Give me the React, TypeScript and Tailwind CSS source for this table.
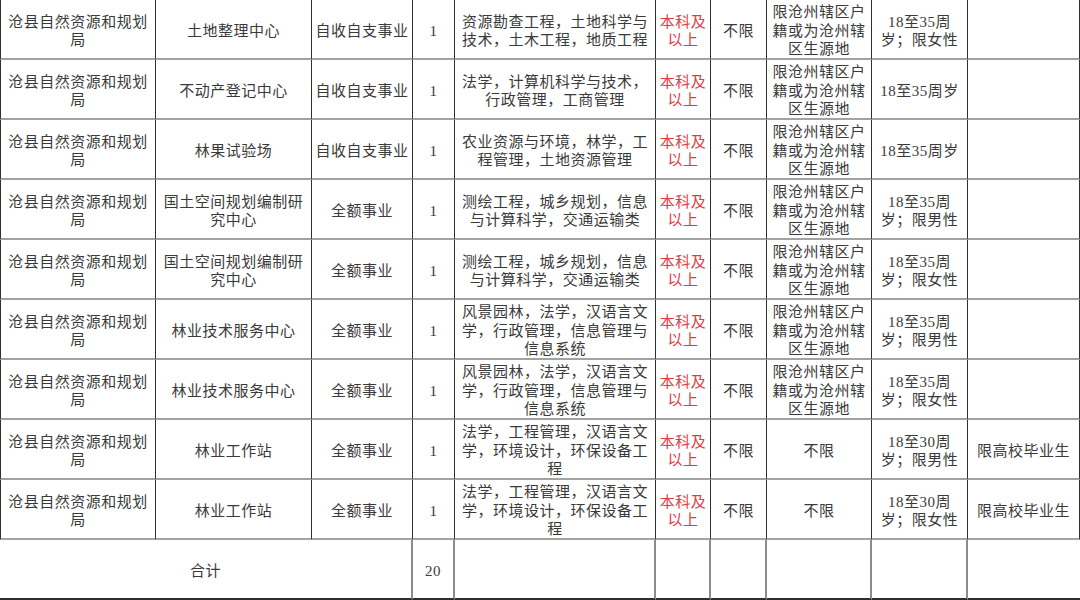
import React from "react";

type Row = {
  unit: string[];
  dept: string[];
  kind: string;
  count: string;
  major: string[];
  edu: string[];
  degree: string;
  origin: string[];
  age: string[];
  note: string;
};

const ORG = ["沧县自然资源和规划", "局"];
const LOCAL = ["限沧州辖区户", "籍或为沧州辖", "区生源地"];
const EDU = ["本科及", "以上"];

const rows: Row[] = [
  { unit: ORG, dept: ["土地整理中心"], kind: "自收自支事业", count: "1", major: ["资源勘查工程，土地科学与", "技术，土木工程，地质工程"], edu: EDU, degree: "不限", origin: LOCAL, age: ["18至35周", "岁；限女性"], note: "" },
  { unit: ORG, dept: ["不动产登记中心"], kind: "自收自支事业", count: "1", major: ["法学，计算机科学与技术，", "行政管理，工商管理"], edu: EDU, degree: "不限", origin: LOCAL, age: ["18至35周岁"], note: "" },
  { unit: ORG, dept: ["林果试验场"], kind: "自收自支事业", count: "1", major: ["农业资源与环境，林学，工", "程管理，土地资源管理"], edu: EDU, degree: "不限", origin: LOCAL, age: ["18至35周岁"], note: "" },
  { unit: ORG, dept: ["国土空间规划编制研", "究中心"], kind: "全额事业", count: "1", major: ["测绘工程，城乡规划，信息", "与计算科学，交通运输类"], edu: EDU, degree: "不限", origin: LOCAL, age: ["18至35周", "岁；限男性"], note: "" },
  { unit: ORG, dept: ["国土空间规划编制研", "究中心"], kind: "全额事业", count: "1", major: ["测绘工程，城乡规划，信息", "与计算科学，交通运输类"], edu: EDU, degree: "不限", origin: LOCAL, age: ["18至35周", "岁；限女性"], note: "" },
  { unit: ORG, dept: ["林业技术服务中心"], kind: "全额事业", count: "1", major: ["风景园林，法学，汉语言文", "学，行政管理，信息管理与", "信息系统"], edu: EDU, degree: "不限", origin: LOCAL, age: ["18至35周", "岁；限男性"], note: "" },
  { unit: ORG, dept: ["林业技术服务中心"], kind: "全额事业", count: "1", major: ["风景园林，法学，汉语言文", "学，行政管理，信息管理与", "信息系统"], edu: EDU, degree: "不限", origin: LOCAL, age: ["18至35周", "岁；限女性"], note: "" },
  { unit: ORG, dept: ["林业工作站"], kind: "全额事业", count: "1", major: ["法学，工程管理，汉语言文", "学，环境设计，环保设备工", "程"], edu: EDU, degree: "不限", origin: ["不限"], age: ["18至30周", "岁；限男性"], note: "限高校毕业生" },
  { unit: ORG, dept: ["林业工作站"], kind: "全额事业", count: "1", major: ["法学，工程管理，汉语言文", "学，环境设计，环保设备工", "程"], edu: EDU, degree: "不限", origin: ["不限"], age: ["18至30周", "岁；限女性"], note: "限高校毕业生" },
];

function Cell({ lines, first, red }: { lines: string[]; first?: boolean; red?: boolean }) {
  return (
    <div
      className={
        "flex flex-col items-center justify-center text-center h-[60px] pt-[4px] border-r border-r-[#2e2e2e] border-b-2 border-b-[#a3a3a3] leading-[18.5px] whitespace-nowrap " +
        (first ? "border-l border-l-[#2e2e2e] " : "") +
        (red ? "text-[#dd3d42]" : "text-[#3a3a3a]")
      }
    >
      {lines.map((l, i) => (
        <span key={i}>{l}</span>
      ))}
    </div>
  );
}

export default function App() {
  return (
    <div
      className="w-[1080px] h-[600px] bg-white overflow-hidden text-[15px] tracking-[0.5px]"
      style={{ fontFamily: '"Liberation Serif", "Noto Sans CJK SC", serif' }}
    >
      <div className="grid grid-cols-[156px_156px_101px_42px_201px_55px_56px_105px_96px_112px]">
        {rows.map((r, i) => (
          <React.Fragment key={i}>
            <Cell lines={r.unit} first />
            <Cell lines={r.dept} />
            <Cell lines={[r.kind]} />
            <Cell lines={[r.count]} />
            <Cell lines={r.major} />
            <Cell lines={r.edu} red />
            <Cell lines={[r.degree]} />
            <Cell lines={r.origin} />
            <Cell lines={r.age} />
            <Cell lines={[r.note]} />
          </React.Fragment>
        ))}

        {/* 合计 */}
        <div className="col-span-3 flex items-center justify-center h-[60px] pt-[4px] border-r-2 border-r-[#8c8c8c] border-b-2 border-b-[#2e2e2e] text-[#3a3a3a]">
          合计
        </div>
        <div className="flex items-center justify-center h-[60px] pt-[4px] border-r-2 border-r-[#8c8c8c] border-b-2 border-b-[#2e2e2e] text-[#3a3a3a]">
          20
        </div>
        <div className="h-[60px] border-r-2 border-r-[#8c8c8c] border-b-2 border-b-[#2e2e2e]" />
        <div className="h-[60px] border-r-2 border-r-[#8c8c8c] border-b-2 border-b-[#2e2e2e]" />
        <div className="h-[60px] border-r-2 border-r-[#8c8c8c] border-b-2 border-b-[#2e2e2e]" />
        <div className="h-[60px] border-r-2 border-r-[#8c8c8c] border-b-2 border-b-[#2e2e2e]" />
        <div className="h-[60px] border-r-2 border-r-[#8c8c8c] border-b-2 border-b-[#2e2e2e]" />
        <div className="h-[60px] border-b-2 border-b-[#2e2e2e]" />
      </div>
    </div>
  );
}
